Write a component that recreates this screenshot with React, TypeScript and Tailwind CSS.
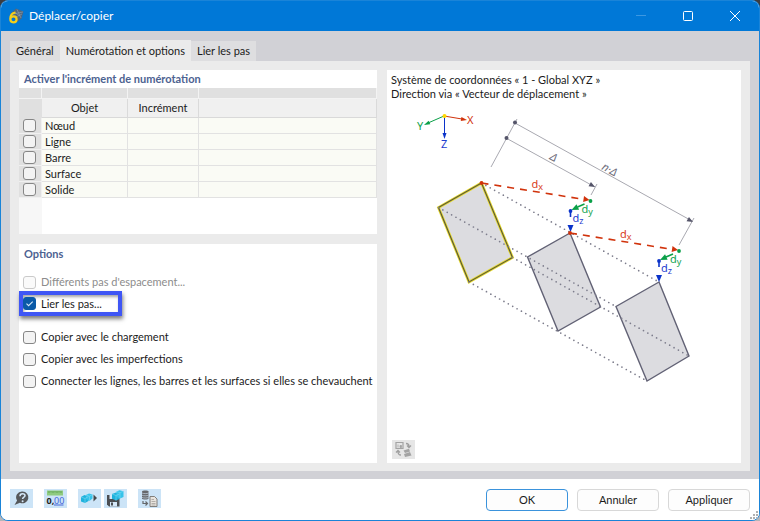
import React, { useState } from "react";

type Option = { id: string; label: string };

function Tick({
  id,
  defaultChecked = false,
  disabled = false,
}: {
  id: string;
  defaultChecked?: boolean;
  disabled?: boolean;
}) {
  return (
    <span className="grid shrink-0">
      <input
        id={id}
        type="checkbox"
        defaultChecked={defaultChecked}
        disabled={disabled}
        className="peer [grid-area:1/1] size-[13px] appearance-none rounded-[3px] border border-[#868686] bg-[#f3f3f3] checked:border-[#0a5aa8] checked:bg-[#0a5aa8] disabled:border-[#cacaca] disabled:bg-[#fafafa]"
      />
      <svg
        viewBox="0 0 13 13"
        className="pointer-events-none invisible [grid-area:1/1] size-[13px] peer-checked:visible"
        fill="none"
        stroke="#d6e8f8"
        strokeWidth="1.1"
      >
        <path d="M3.5 6.6 5.6 8.7 9.7 4.6" />
      </svg>
    </span>
  );
}

function AppIcon() {
  return (
    <svg viewBox="0 0 16 16" className="size-4">
      <path d="M3 5 8 0.500 15.500 3.500 13.500 10.500 9.500 14 5 9z" fill="#52677c" />
      <path d="M6 4 12 8M9 1.500 13 10M5 6 15 4M8 9 14 6" stroke="#8ea3b4" strokeWidth="0.6" />
      <path
        d="M7.500 4.500C4 5 2.300 7.400 2.300 10.800c0 2.200 1.200 3.500 3 3.500s3.300-1.200 3.300-3.100-1.200-2.800-2.900-2.800c-1.300 0-2.400.6-3.100 1.600"
        fill="none"
        stroke="#f5cf1b"
        strokeWidth="2.200"
      />
    </svg>
  );
}

function HelpIcon() {
  return (
    <svg viewBox="0 0 23 19" className="h-[19px] w-[23px]">
      <path d="M12.500 2.500a5.900 5.900 0 1 1-2.600 11.200L4.500 16l2.600-4.400A5.900 5.900 0 0 1 12.500 2.500z" fill="#55585b" />
      <path d="M10 7.200c0-1.700 1.100-2.500 2.500-2.500s2.500.8 2.500 2c0 1.600-2.400 1.500-2.400 3.400" fill="none" stroke="#d5e8f8" strokeWidth="1.500" />
      <circle cx="12.600" cy="12.200" r="1" fill="#d5e8f8" />
    </svg>
  );
}

function UnitsIcon() {
  return (
    <svg viewBox="0 0 23 19" className="h-[19px] w-[23px]">
      <rect x="3" y="1.500" width="16" height="5" fill="#8fcb7f" />
      <path d="M5 2v2M7 2v1.500M9 2v2M11 2v1.500M13 2v2M15 2v1.500M17 2v2" stroke="#4f9444" strokeWidth="0.7" />
      <text x="2.500" y="14.500" fontSize="9" fontWeight="700" fill="#222" fontFamily="Noto Sans, sans-serif">
        0,
      </text>
      <text x="10" y="14.500" fontSize="9" fill="#4666d8" fontFamily="Noto Sans, sans-serif">
        00
      </text>
      <path d="M10 16h9.500" stroke="#4666d8" strokeWidth="1" />
    </svg>
  );
}

function CubeIcon() {
  return (
    <svg viewBox="0 0 23 19" className="h-[19px] w-[23px]">
      <path d="M3 8 6.500 6 10.500 7.500V12L7 14 3 12.500z" fill="#1fb2dd" />
      <path d="M8 6 11 4.500 14.500 5.500V9.500L11.500 12 8 10z" fill="#35c3ea" />
      <path d="M3 8 7 9.500 10.500 7.500M7 9.500V14M8 6 11.500 7.200 14.500 5.500M11.500 7.200V12" fill="none" stroke="#7fd8f2" strokeWidth="0.6" />
      <path d="M15.500 5.500v7L19 9z" fill="#45494d" />
    </svg>
  );
}

function SaveCubeIcon() {
  return (
    <svg viewBox="0 0 23 19" className="h-[19px] w-[23px]">
      <path d="M3 6h10.500L15.500 8.500V17.500H5L3 15.500z" fill="#4b4e52" />
      <path d="M5.500 6h5v4h-5zM6 13h7v4.500H6z" fill="#d5e8f8" />
      <path d="M7 13.500h2v3H7z" fill="#4b4e52" />
      <path d="M8 5 12 3.500 15.500 5V10L12 11.500 8 9.800z" fill="#1fb2dd" />
      <path d="M12.500 2.500 15.500 1.200 19.500 2.200V8L16 9.500 12.500 8z" fill="#35c3ea" />
      <path d="M8 5 12 6.500 15.500 5M12 6.500v5M12.500 2.500 16 3.700 19.500 2.200M16 3.700v5.500" fill="none" stroke="#7fd8f2" strokeWidth="0.6" />
    </svg>
  );
}

function DatabaseIcon() {
  return (
    <svg viewBox="0 0 23 19" className="h-[19px] w-[23px]">
      <path d="M4 2.500c0-1.300 6.500-1.300 6.500 0v7c0 1.300-6.500 1.300-6.500 0z" fill="#66686b" />
      <path d="M4 4c1 .8 5.500 .8 6.500 0M4 6.200c1 .8 5.500 .8 6.500 0M4 8.400c1 .8 5.500 .8 6.500 0" fill="none" stroke="#d5e8f8" strokeWidth="0.6" />
      <path d="M5 12v2.500h4M7.500 12.500l2 2-2 2" fill="none" stroke="#66686b" strokeWidth="1.200" />
      <path d="M12 7.500h4.500l2.500 2.500v7.500H12z" fill="#e8e4de" stroke="#77736e" strokeWidth="0.9" />
      <path d="M13.500 10.500h2.500M13.500 12.500h4M13.500 14.500h4M13.500 16h4" stroke="#8d8984" strokeWidth="0.6" />
    </svg>
  );
}

function SwapViewIcon() {
  return (
    <svg viewBox="0 0 23 19" className="h-[19px] w-[23px]">
      <path d="M4 2.500h7v6H4z" fill="none" stroke="#a3a3a3" strokeWidth="1.200" />
      <path d="M6 7.500V4.500M8 7.500V5.500h1.500v2z" fill="#a3a3a3" stroke="#a3a3a3" strokeWidth="0.8" />
      <path d="M14 3.500c2 0 3 .8 3 3M15 5.500l2 2 2-2M6 11.500c0 2.200.8 3.500 3 3.500M4 12.500l2-2 2 2" fill="none" stroke="#9f9f9f" strokeWidth="1.300" />
      <path d="M11.500 10.500 17 8.800 18 11.500 13 13zM12 14l6-2 1.500 3.500-6.500 1.500z" fill="#a3a3a3" />
    </svg>
  );
}

type Pt = [number, number];

const line = (a: Pt, b: Pt) => ({ x1: a[0], y1: a[1], x2: b[0], y2: b[1] });

/* Arrow head with its tip at `tip`, pointing away from `from`. */
function Head({ from, tip, fill, len, half }: { from: Pt; tip: Pt; fill: string; len: number; half: number }) {
  const dx = tip[0] - from[0];
  const dy = tip[1] - from[1];
  const d = Math.hypot(dx, dy);
  const ux = dx / d;
  const uy = dy / d;
  const bx = tip[0] - ux * len;
  const by = tip[1] - uy * len;
  return (
    <polygon
      fill={fill}
      points={`${tip[0]},${tip[1]} ${bx - uy * half},${by + ux * half} ${bx + uy * half},${by - ux * half}`}
    />
  );
}

function Label({ x, y, sub, fill }: { x: number; y: number; sub: string; fill: string }) {
  return (
    <text x={x} y={y} fontSize="11" fill={fill}>
      d
      <tspan fontSize="9" dy="2">
        {sub}
      </tspan>
    </text>
  );
}

function Step({ x, y }: { x: number; y: number }) {
  return (
    <g>
      <line {...line([x, y], [x + 100, y + 16])} stroke="#d1330c" strokeWidth="1.600" strokeDasharray="7 6" />
      <Head from={[x, y]} tip={[x + 108, y + 17]} fill="#d1330c" len={6} half={3} />
      <circle cx={x} cy={y} r="1.900" fill="#d1330c" />
      <line {...line([x + 103, y + 21], [x + 96, y + 24])} stroke="#0aa048" strokeWidth="1.600" />
      <Head from={[x + 109, y + 18]} tip={[x + 90, y + 27]} fill="#0aa048" len={7} half={3} />
      <circle cx={x + 109} cy={y + 18} r="1.900" fill="#0aa048" />
      <line {...line([x + 89, y + 28], [x + 89, y + 34])} stroke="#0b33c9" strokeWidth="1.600" />
      <Head from={[x + 89, y + 28]} tip={[x + 89, y + 49]} fill="#0b33c9" len={7} half={3} />
      <circle cx={x + 89} cy={y + 28} r="1.900" fill="#0b33c9" />
      <Label x={x + 50} y={y + 5} sub="x" fill="#d8401c" />
      <Label x={x + 100} y={y + 30} sub="y" fill="#12a34f" />
      <Label x={x + 91} y={y + 39} sub="z" fill="#1f40cf" />
    </g>
  );
}

function Diagram() {
  const shape = "481.5,183 438.5,207.5 469,282 512.500,257.5";
  return (
    <svg
      viewBox="387 101 354 290"
      className="w-full"
      fontFamily="Noto Sans, sans-serif"
      role="img"
      aria-label="Vecteur de déplacement"
    >
      <line {...line([444, 116], [462, 119])} stroke="#d1330c" />
      <Head from={[444, 116]} tip={[467, 120]} fill="#d1330c" len={6} half={2} />
      <line {...line([444, 116], [428, 123])} stroke="#0aa048" />
      <Head from={[444, 116]} tip={[424, 125]} fill="#0aa048" len={6} half={2} />
      <line {...line([444.5, 116], [444.5, 134])} stroke="#0b33c9" />
      <Head from={[444.5, 116]} tip={[444.5, 139]} fill="#0b33c9" len={6} half={2} />
      <circle cx="444.500" cy="116" r="2" fill="#ffd800" />
      <text x="467" y="124" fontSize="11" fill="#d1340f">X</text>
      <text x="417" y="130" fontSize="11" fill="#12a34f">Y</text>
      <text x="441" y="148" fontSize="11" fill="#1f40cf">Z</text>

      <g stroke="#a9a9b1" strokeWidth="1">
        <line {...line([517, 119], [491, 167])} />
        <line {...line([506, 138], [595, 187])} />
        <line {...line([515, 123], [692, 221])} />
        <line {...line([597, 184], [591, 195])} />
        <line {...line([694, 218], [679, 245])} />
      </g>
      <circle cx="506.500" cy="138" r="2" fill="#55556a" />
      <circle cx="515" cy="122.500" r="2" fill="#55556a" />
      <Head from={[506, 138]} tip={[595, 187]} fill="#55556a" len={6} half={2.5} />
      <Head from={[515, 123]} tip={[693, 222]} fill="#55556a" len={6} half={2.5} />
      <text transform="translate(549 159) rotate(29)" fontSize="11" fontStyle="italic" fill="#6d6d7c">Δ</text>
      <text transform="translate(601 169) rotate(29)" fontSize="11" fontStyle="italic" fill="#6d6d7c">n·Δ</text>

      <polygon points={shape} fill="#dcdce0" stroke="#e8dc2e" strokeWidth="2.800" />
      <polygon points={shape} fill="none" stroke="#5d5a3a" strokeWidth="1.200" />
      <polygon points="570,233 527.5,257 558,331 600.5,307" fill="#dcdce0" stroke="#626275" strokeWidth="1.400" />
      <polygon points="659,282 616,306.5 647,381 689,356" fill="#dcdce0" stroke="#626275" strokeWidth="1.400" />

      <g stroke="#7d7d8c" strokeWidth="1.700" strokeLinecap="round" strokeDasharray="0 5">
        <line {...line([481.5, 183], [659, 282])} />
        <line {...line([438.5, 207.5], [616, 306.5])} />
        <line {...line([512.5, 257.5], [689, 356])} />
        <line {...line([469, 282], [647, 381])} />
      </g>

      <Step x={481.5} y={183} />
      <Step x={570} y={233} />
    </svg>
  );
}

const tabs = ["Général", "Numérotation et options", "Lier les pas"];
const objects = ["Nœud", "Ligne", "Barre", "Surface", "Solide"];
const copyOptions: Option[] = [
  { id: "load", label: "Copier avec le chargement" },
  { id: "imperfections", label: "Copier avec les imperfections" },
  { id: "connect", label: "Connecter les lignes, les barres et les surfaces si elles se chevauchent" },
];

const headCell = "border-b border-r border-b-[#d9d9d9] border-r-[#dadada] bg-[#f0f0f0] p-0 font-normal";
const stripCell = "border-b border-r border-[#f3f3f3] bg-[#e0e0e0] p-0";
const bodyCell = "border-b border-r border-[#e2e2e2] bg-[#fafbf5] p-0";
const tool = "h-[19px] w-[23px] bg-[#cce4f7]";
const action = "h-[22px] w-[82px] rounded-[4px] border bg-[#fdfdfd]";

export default function App() {
  const [active, setActive] = useState(1);
  return (
    <div className="min-h-screen bg-linear-to-b from-[#3c3c40] to-[#b4b6ba] font-['Lato','Noto_Sans',sans-serif] text-[11px] leading-[14px] text-[#1b1b1b]">
      <div className="flex min-h-screen flex-col overflow-hidden rounded-lg border border-[#1a84d8] bg-white">
        <header className="flex h-[30px] items-center justify-between bg-[#0078d7] pl-[7px] text-white">
          <div className="flex items-center gap-[5px]">
            <AppIcon />
            <h1 className="text-xs">Déplacer/copier</h1>
          </div>
          <div className="flex">
            <button type="button" aria-label="Réduire" disabled className="grid h-[30px] w-12 place-items-center">
              <svg viewBox="0 0 10 10" className="size-[10px]" stroke="#3c98e2">
                <path d="M0 4.500h10" />
              </svg>
            </button>
            <button type="button" aria-label="Agrandir" className="grid h-[30px] w-[46px] place-items-center">
              <svg viewBox="0 0 10 10" className="size-[10px]" fill="none" stroke="#fff">
                <rect x="0.500" y="0.500" width="9" height="9" rx="1" />
              </svg>
            </button>
            <button type="button" aria-label="Fermer" className="grid h-[30px] w-12 place-items-center">
              <svg viewBox="0 0 10 10" className="size-[10px]" stroke="#fff">
                <path d="M0 0 10 10M10 0 0 10" />
              </svg>
            </button>
          </div>
        </header>

        <main className="flex flex-1 flex-col bg-[#d1d1d6] px-[9px] pb-2 pt-[9px]">
          <div role="tablist" className="flex items-end">
            {tabs.map((name, i) => (
              <button
                key={name}
                type="button"
                role="tab"
                aria-selected={i === active}
                onClick={() => setActive(i)}
                className={
                  i === active
                    ? "h-[21px] bg-[#ebebeb] px-[6px] pt-px"
                    : "h-5 bg-[#dedee0] px-[6px]"
                }
              >
                {name}
              </button>
            ))}
          </div>

          <div role="tabpanel" className="grid flex-1 grid-cols-[358fr_354fr] gap-[10px] bg-[#ebebeb] px-[9px] pb-2 pt-[9px]">
            <div className="flex flex-col gap-[10px]">
              <section className="bg-white">
                <h2 className="px-[5px] pb-[2px] pt-[2px] font-bold text-[#4d6291]">
                  Activer l'incrément de numérotation
                </h2>
                <table className="w-full table-fixed border-separate border-spacing-0">
                  <colgroup>
                    <col className="w-[23px]" />
                    <col className="w-[86px]" />
                    <col className="w-[71px]" />
                    <col />
                  </colgroup>
                  <thead>
                    <tr className="h-[11px]">
                      <td className={stripCell} />
                      <td className={stripCell} />
                      <td className={stripCell} />
                      <td className={stripCell} />
                    </tr>
                    <tr className="h-[19px]">
                      <td className="border-b border-r border-[#e0e0e0] bg-[#e0e0e0] p-0" />
                      <th scope="col" className={headCell}>Objet</th>
                      <th scope="col" className={headCell}>Incrément</th>
                      <td className={headCell} />
                    </tr>
                  </thead>
                  <tbody>
                    {objects.map((name) => (
                      <tr key={name} className="h-4">
                        <td className="border-b border-r border-[#f0f0f0] bg-[#e0e0e0] p-0 pl-1">
                          <Tick id={`increment-${name}`} />
                        </td>
                        <td className={bodyCell}>
                          <label htmlFor={`increment-${name}`} className="block pl-[3px]">
                            {name}
                          </label>
                        </td>
                        <td className={bodyCell} />
                        <td className={bodyCell} />
                      </tr>
                    ))}
                  </tbody>
                </table>
                <div className="h-9">
                  <div className="h-full w-[23px] bg-[#f7f7f7]" />
                </div>
              </section>

              <section className="flex flex-1 flex-col bg-white">
                <h2 className="px-[5px] pb-[2px] pt-[3px] font-bold text-[#4d6291]">Options</h2>
                <div className="flex flex-col items-start pt-3">
                  <label htmlFor="steps" className="flex items-center gap-[5px] px-1 text-[#8c8c8c]">
                    <Tick id="steps" disabled />
                    Différents pas d'espacement...
                  </label>
                  <label
                    htmlFor="link"
                    className="mb-[14px] mt-[2px] flex h-[25px] w-[103px] items-center gap-[5px] border-4 border-[#3f56f5] shadow-[1px_3px_4px_rgba(0,0,0,0.5),inset_1px_2px_3px_rgba(0,0,0,0.35)]"
                  >
                    <Tick id="link" defaultChecked />
                    Lier les pas...
                  </label>
                  <div className="flex flex-col gap-2 pl-1">
                    {copyOptions.map((o) => (
                      <label key={o.id} htmlFor={o.id} className="flex items-center gap-[5px]">
                        <Tick id={o.id} />
                        {o.label}
                      </label>
                    ))}
                  </div>
                </div>
              </section>
            </div>

            <section className="flex flex-col bg-white pt-[3px]">
              <p className="px-1">Système de coordonnées « 1 - Global XYZ »</p>
              <p className="px-1">Direction via « Vecteur de déplacement »</p>
              <Diagram />
              <div className="mt-auto p-1 pl-[5px]">
                <button type="button" disabled aria-label="Changer de vue" className="block bg-[#e6e6e6]">
                  <SwapViewIcon />
                </button>
              </div>
            </section>
          </div>
        </main>

        <footer className="flex items-start justify-between bg-white pl-[9px]">
          <div className="flex pt-[10px]">
            <button type="button" aria-label="Aide" className={tool}>
              <HelpIcon />
            </button>
            <button type="button" aria-label="Unités et décimales" className={`ml-[11px] ${tool}`}>
              <UnitsIcon />
            </button>
            <button type="button" aria-label="Charger un modèle" className={`ml-[11px] ${tool}`}>
              <CubeIcon />
            </button>
            <button type="button" aria-label="Enregistrer le modèle" className={`ml-[3px] ${tool}`}>
              <SaveCubeIcon />
            </button>
            <button type="button" aria-label="Exporter les données" className={`ml-[11px] ${tool}`}>
              <DatabaseIcon />
            </button>
          </div>
          <div className="flex">
            <div className="flex gap-[9px] pb-[9px] pt-[10px]">
              <button type="button" className={`${action} border-[#3b93dc]`}>OK</button>
              <button type="button" className={`${action} border-[#d8d8d8]`}>Annuler</button>
              <button type="button" className={`${action} border-[#d8d8d8]`}>Appliquer</button>
            </div>
            <svg viewBox="0 0 9 9" className="size-[9px] self-end" fill="#b0b0b0">
              <path d="M6 0h2v2H6zM3 3h2v2H3zM6 3h2v2H6zM0 6h2v2H0zM3 6h2v2H3zM6 6h2v2H6z" />
            </svg>
          </div>
        </footer>
      </div>
    </div>
  );
}
